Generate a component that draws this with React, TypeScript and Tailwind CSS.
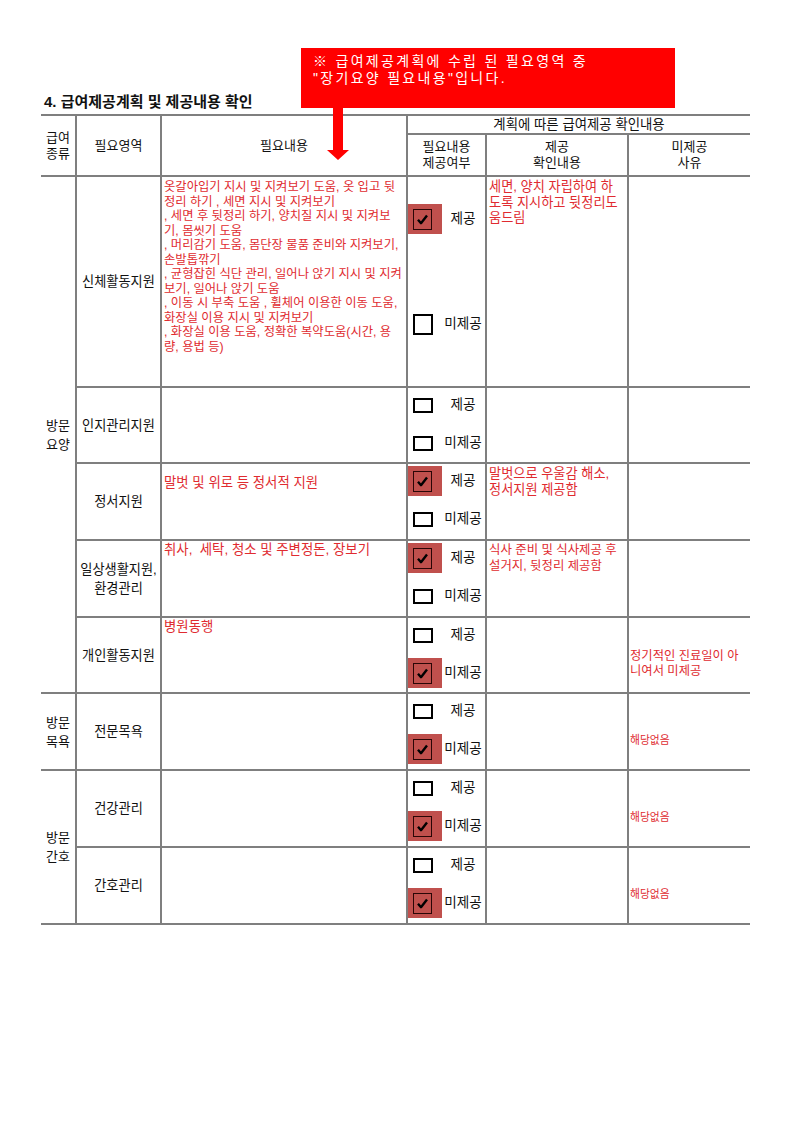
import React from 'react';

type Choice = 'yes' | 'no' | 'none';

type Row = {
  kind?: { label: string[]; span: number };
  area: string[];
  need: string[];
  needPad: string;
  choice: Choice;
  tall?: boolean;
  confirm: string[];
  confirmSize: string;
  reason: string[];
  reasonSize: string;
  h: string;
};

const rows: Row[] = [
  {
    kind: { label: ['방문', '요양'], span: 5 },
    area: ['신체활동지원'],
    need: [
      '옷갈아입기 지시 및 지켜보기 도움, 옷 입고 뒷',
      '정리 하기 , 세면 지시 및 지켜보기',
      ', 세면 후 뒷정리 하기, 양치질 지시 및 지켜보',
      '기, 몸씻기 도움',
      ', 머리감기 도움, 몸단장 물품 준비와 지켜보기,',
      '손발톱깎기',
      ', 균형잡힌 식단 관리, 일어나 앉기 지시 및 지켜',
      '보기, 일어나 앉기 도움',
      ', 이동 시 부축 도움 , 휠체어 이용한 이동 도움,',
      '화장실 이용 지시 및 지켜보기',
      ', 화장실 이용 도움, 정확한 복약도움(시간, 용',
      '량, 용법 등)',
    ],
    needPad: 'pt-[3px] text-[12.3px] leading-[14.5px]',
    choice: 'yes',
    tall: true,
    confirm: ['세면, 양치 자립하여 하', '도록 지시하고 뒷정리도', '움드림'],
    confirmSize: 'text-[13.2px]',
    reason: [],
    reasonSize: '',
    h: 'h-[211px]',
  },
  {
    area: ['인지관리지원'],
    need: [],
    needPad: '',
    choice: 'none',
    confirm: [],
    confirmSize: '',
    reason: [],
    reasonSize: '',
    h: 'h-[76px]',
  },
  {
    area: ['정서지원'],
    need: ['말벗 및 위로 등 정서적 지원'],
    needPad: 'pt-[11px] text-[13.4px] leading-[16px]',
    choice: 'yes',
    confirm: ['말벗으로 우울감 해소,', '정서지원 제공함'],
    confirmSize: 'text-[13.2px]',
    reason: [],
    reasonSize: '',
    h: 'h-[77px]',
  },
  {
    area: ['일상생활지원,', '환경관리'],
    need: ['취사,  세탁, 청소 및 주변정돈, 장보기'],
    needPad: 'pt-[1px] text-[13.4px] leading-[16px]',
    choice: 'yes',
    confirm: ['식사 준비 및 식사제공 후', '설거지, 뒷정리 제공함'],
    confirmSize: 'text-[12.4px]',
    reason: [],
    reasonSize: '',
    h: 'h-[77px]',
  },
  {
    area: ['개인활동지원'],
    need: ['병원동행'],
    needPad: 'pt-[1px] text-[13.4px] leading-[16px]',
    choice: 'no',
    confirm: [],
    confirmSize: '',
    reason: ['정기적인 진료일이 아', '니여서 미제공'],
    reasonSize: 'text-[12.3px]',
    h: 'h-[76px]',
  },
  {
    kind: { label: ['방문', '목욕'], span: 1 },
    area: ['전문목욕'],
    need: [],
    needPad: '',
    choice: 'no',
    confirm: [],
    confirmSize: '',
    reason: ['해당없음'],
    reasonSize: 'text-[10.8px]',
    h: 'h-[77px]',
  },
  {
    kind: { label: ['방문', '간호'], span: 2 },
    area: ['건강관리'],
    need: [],
    needPad: '',
    choice: 'no',
    confirm: [],
    confirmSize: '',
    reason: ['해당없음'],
    reasonSize: 'text-[10.8px]',
    h: 'h-[77px]',
  },
  {
    area: ['간호관리'],
    need: [],
    needPad: '',
    choice: 'no',
    confirm: [],
    confirmSize: '',
    reason: ['해당없음'],
    reasonSize: 'text-[10.8px]',
    h: 'h-[77px]',
  },
];

const Box = ({ checked, tall }: { checked: boolean; tall?: boolean }) =>
  checked ? (
    <div className="w-[34px] h-[30px] bg-[#c0504d] flex items-center pl-[5px] shrink-0">
      <div className="w-[19px] h-[21px] border-[1.5px] border-[#2a0606] flex items-center justify-center">
        <svg width="13" height="13" viewBox="0 0 13 13">
          <path d="M2 6.8 L5 10.2 L11 2.6" fill="none" stroke="#000" strokeWidth="2.4" strokeLinejoin="round" />
        </svg>
      </div>
    </div>
  ) : (
    <div className="w-[34px] h-[30px] flex items-center pl-[5px] shrink-0">
      <div className={`w-[20px] ${tall ? 'h-[21px]' : 'h-[15px]'} border-2 border-black`} />
    </div>
  );

const Option = ({ checked, label, tall }: { checked: boolean; label: string; tall?: boolean }) => (
  <div className="flex items-center h-[30px]">
    <Box checked={checked} tall={tall} />
    <div className="flex-1 text-center text-[13.6px] text-[#111] pr-[1px]">{label}</div>
  </div>
);

const cell = 'border-2 border-[#7f7f7f] p-0';
const red = 'text-[#e02b30]';
const head = 'font-normal text-[13px] leading-[16px]';

export default function App() {
  return (
    <div className="relative w-[793px] h-[1122px] bg-white font-['Liberation_Sans','Noto_Sans_CJK_KR',sans-serif] text-[#111]">
      <div className="pt-[92px] pl-[44px] h-[114px] text-[15px] font-bold leading-[20px]">
        4. 급여제공계획 및 제공내용 확인
      </div>

      <table className="ml-[41px] w-[709px] table-fixed border-collapse">
        <colgroup>
          <col className="w-[35px]" />
          <col className="w-[85px]" />
          <col className="w-[246px]" />
          <col className="w-[79px]" />
          <col className="w-[142px]" />
          <col className="w-[122px]" />
        </colgroup>
        <thead>
          <tr className="h-[19px]">
            <th rowSpan={2} className={`${cell} border-l-0 ${head}`}>
              급여
              <br />
              종류
            </th>
            <th rowSpan={2} className={`${cell} ${head}`}>필요영역</th>
            <th rowSpan={2} className={`${cell} ${head}`}>필요내용</th>
            <th colSpan={3} className={`${cell} border-r-0 font-normal text-[13.4px] leading-[16px]`}>
              계획에 따른 급여제공 확인내용
            </th>
          </tr>
          <tr className="h-[42px]">
            <th className={`${cell} ${head}`}>
              필요내용
              <br />
              제공여부
            </th>
            <th className={`${cell} ${head}`}>
              제공
              <br />
              확인내용
            </th>
            <th className={`${cell} border-r-0 ${head}`}>
              미제공
              <br />
              사유
            </th>
          </tr>
        </thead>
        <tbody>
          {rows.map((r, i) => (
            <tr key={i} className={r.h}>
              {r.kind && (
                <td rowSpan={r.kind.span} className={`${cell} border-l-0 text-center align-middle text-[13px] leading-[19px]`}>
                  {r.kind.label.map((l) => (
                    <div key={l}>{l}</div>
                  ))}
                </td>
              )}
              <td className={`${cell} text-center align-middle text-[13.2px] leading-[19px]`}>
                {r.area.map((l) => (
                  <div key={l}>{l}</div>
                ))}
              </td>
              <td className={`${cell} align-top`}>
                <div className={`pl-[2px] ${red} whitespace-pre ${r.needPad}`}>
                  {r.need.map((l, k) => (
                    <div key={k}>{l}</div>
                  ))}
                </div>
              </td>
              <td className={`${cell} align-top`}>
                {r.tall ? (
                  <div className="flex flex-col pt-[27px] gap-[75px]">
                    <Option checked={r.choice === 'yes'} label="제공" />
                    <Option checked={r.choice === 'no'} label="미제공" tall />
                  </div>
                ) : (
                  <div className="flex flex-col pt-[2px] gap-[8px]">
                    <Option checked={r.choice === 'yes'} label="제공" />
                    <Option checked={r.choice === 'no'} label="미제공" />
                  </div>
                )}
              </td>
              <td className={`${cell} align-top`}>
                <div className={`pl-[2px] pt-[2px] leading-[15.5px] whitespace-nowrap ${red} ${r.confirmSize}`}>
                  {r.confirm.map((l, k) => (
                    <div key={k}>{l}</div>
                  ))}
                </div>
              </td>
              <td className={`${cell} border-r-0 align-top`}>
                <div className={`pl-[1px] pt-[31px] leading-[15px] whitespace-nowrap ${red} ${r.reasonSize}`}>
                  {r.reason.length === 1 ? <div className="pt-[8px]">{r.reason[0]}</div> : r.reason.map((l, k) => <div key={k}>{l}</div>)}
                </div>
              </td>
            </tr>
          ))}
        </tbody>
      </table>

      {/* callout over the table */}
      <div className="absolute left-[301px] top-[48px] w-[374px] h-[60px] bg-[#ff0000] pl-[12px] pt-[5px] text-white text-[14px] leading-[17px] tracking-[2.3px]">
        <div>※ 급여제공계획에 수립 된 필요영역 중</div>
        <div>"장기요양 필요내용"입니다.</div>
      </div>
      <svg className="absolute left-[327px] top-[107px]" width="23" height="54" viewBox="0 0 23 54">
        <path d="M6 0 H16 V43 H22 L11 53 L0 43 H6 Z" fill="#ff0000" />
      </svg>
    </div>
  );
}
